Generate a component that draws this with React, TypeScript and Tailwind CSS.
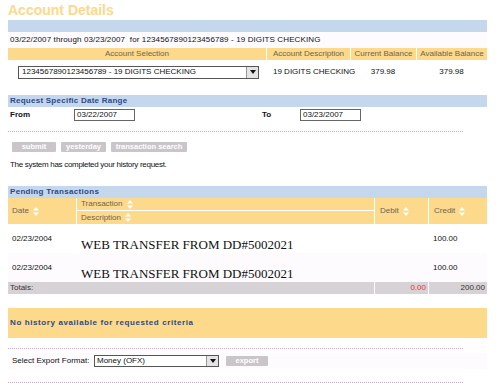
import React from "react";

const font = { fontFamily: '"Liberation Sans", Arial, sans-serif' };

const Sort = () => (
  <svg width="6" height="9" viewBox="0 0 6 9" className="ml-1 inline-block">
    <path d="M3 0 L6 3.5 H0 Z" fill="#ffffff" />
    <path d="M3 9 L6 5.5 H0 Z" fill="#ffffff" />
  </svg>
);

const Arrow = () => (
  <span className="flex h-full w-[12px] items-center justify-center border-l border-[#9a9a9a] bg-[#e4e4e4]">
    <svg width="6" height="4" viewBox="0 0 6 4">
      <path d="M0 0 H6 L3 4 Z" fill="#111" />
    </svg>
  </span>
);

const Btn = ({ label, w }: { label: string; w: string }) => (
  <span
    className={`flex h-[10px] ${w} items-center justify-center rounded-[1px] bg-[#c9c5c9] text-[7.5px] font-bold leading-none whitespace-nowrap text-white`}
  >
    {label}
  </span>
);

const Dots = () => <div className="w-[455px] border-t border-dotted border-[#c9a9c6]" />;

const App = () => {
  return (
    <div className="h-[385px] w-[496px] whitespace-nowrap bg-white pl-2 text-[8px] text-[#111]" style={font}>
      <div className="h-[20px] pt-[1px] text-[14px] font-bold leading-[18px] text-[#fcd98c]">Account Details</div>
      <div className="h-[12px] w-[479px] bg-[#c5d7ec]" />
      <div className="flex h-[16px] w-[479px] items-center bg-[#fdfbfd] pl-[2px] tracking-[0.12px]">
        03/22/2007 through 03/23/2007&nbsp;&nbsp;for 1234567890123456789 - 19 DIGITS CHECKING
      </div>

      {/* account selection table */}
      <div className="flex h-[12px] w-[479px] bg-[#fdd98b] text-[#6d6451]">
        <div className="flex w-[258px] items-center justify-center">Account Selection</div>
        <div className="flex w-[84px] items-center justify-center border-l border-white">Account Description</div>
        <div className="flex w-[66px] items-center justify-center border-l border-white">Current Balance</div>
        <div className="flex flex-1 items-center justify-center border-l border-white">Available Balance</div>
      </div>
      <div className="flex h-[24px] w-[479px] items-center">
        <div className="flex w-[258px] pl-[10px]">
          <div className="flex h-[13px] w-[241px] items-center justify-between border border-[#555] bg-white pl-[3px]">
            <span>1234567890123456789 - 19 DIGITS CHECKING</span>
            <Arrow />
          </div>
        </div>
        <div className="w-[84px] pl-[7px]">19 DIGITS CHECKING</div>
        <div className="w-[66px] text-center">379.98</div>
        <div className="flex-1 text-center">379.98</div>
      </div>

      {/* date range */}
      <div className="mt-[11px] flex h-[12px] w-[479px] items-center bg-[#c5d7ec] pl-[2px] font-bold tracking-[0.25px] text-[#2b4a86]">
        Request Specific Date Range
      </div>
      <div className="flex h-[16px] items-center font-bold">
        <span className="w-[66px] pl-[2px]">From</span>
        <span className="flex h-[12px] w-[61px] items-center border border-[#666] pl-[2px] font-normal">03/22/2007</span>
        <span className="w-[165px] pl-[127px]">To</span>
        <span className="flex h-[12px] w-[61px] items-center border border-[#666] pl-[2px] font-normal">03/23/2007</span>
      </div>
      <div className="mt-[8px]">
        <Dots />
      </div>
      <div className="mt-[10px] flex gap-[5px] pl-[4px]">
        <Btn label="submit" w="w-[44px]" />
        <Btn label="yesterday" w="w-[45px]" />
        <Btn label="transaction search" w="w-[76px]" />
      </div>
      <div className="mt-[8px] h-[10px] pl-[2px] leading-[10px] tracking-[-0.3px]">
        The system has completed your history request.
      </div>

      {/* pending transactions */}
      <div className="mt-[16px] flex h-[12px] w-[479px] items-center bg-[#c5d7ec] pl-[2px] font-bold tracking-[0.3px] text-[#2b4a86]">
        Pending Transactions
      </div>
      <div className="flex h-[26px] w-[479px] bg-[#fdd98b] text-[#6d6451]">
        <div className="flex w-[68px] items-center pl-[4px]">
          Date <Sort />
        </div>
        <div className="flex w-[298px] flex-col border-l border-white">
          <div className="flex h-[13px] items-center border-b border-white pl-[4px]">
            Transaction <Sort />
          </div>
          <div className="flex flex-1 items-center pl-[4px]">
            Description <Sort />
          </div>
        </div>
        <div className="flex w-[54px] items-center border-l border-white pl-[5px]">
          Debit <Sort />
        </div>
        <div className="flex flex-1 items-center border-l border-white pl-[5px]">
          Credit <Sort />
        </div>
      </div>
      {[0, 1].map((i) => (
        <div key={i} className={`flex h-[29px] w-[479px] ${i === 1 ? "bg-[#fdfbfd]" : ""}`}>
          <div className="w-[68px] pt-[9px] pl-[4px]">02/23/2004</div>
          <div
            className="w-[298px] pt-[14px] pl-[5px] text-[13px] leading-[14px]"
            style={{ fontFamily: '"Liberation Serif", "Times New Roman", serif' }}
          >
            WEB TRANSFER FROM DD#5002021
          </div>
          <div className="w-[54px]" />
          <div className="flex-1 pt-[9px] pl-[5px]">100.00</div>
        </div>
      ))}
      <div className="flex h-[12px] w-[479px] items-center bg-[#d6d2d6] text-[#333]">
        <div className="w-[366px] pl-[2px]">Totals:</div>
        <div className="w-[54px] border-l border-white pr-[2px] text-right text-[#ff2a2a]">0.00</div>
        <div className="flex-1 border-l border-white pr-[2px] text-right">200.00</div>
      </div>

      <div className="mt-[14px] flex h-[30px] w-[479px] items-center bg-[#fdd98b] pl-[2px] font-bold tracking-[0.6px] text-[#2b4a86]">
        No history available for requested criteria
      </div>
      <div className="mt-[10px]">
        <Dots />
      </div>
      <div className="mt-[4px] flex h-[16px] w-[479px] items-center bg-[#fdfbfd] pl-[4px]">
        <span className="w-[82px]">Select Export Format:</span>
        <div className="flex h-[12px] w-[125px] items-center justify-between border border-[#555] bg-white pl-[2px]">
          <span>Money (OFX)</span>
          <Arrow />
        </div>
        <span className="ml-[7px]">
          <Btn label="export" w="w-[42px]" />
        </span>
      </div>
      <div className="mt-[13px]">
        <Dots />
      </div>
    </div>
  );
};

export default App;
